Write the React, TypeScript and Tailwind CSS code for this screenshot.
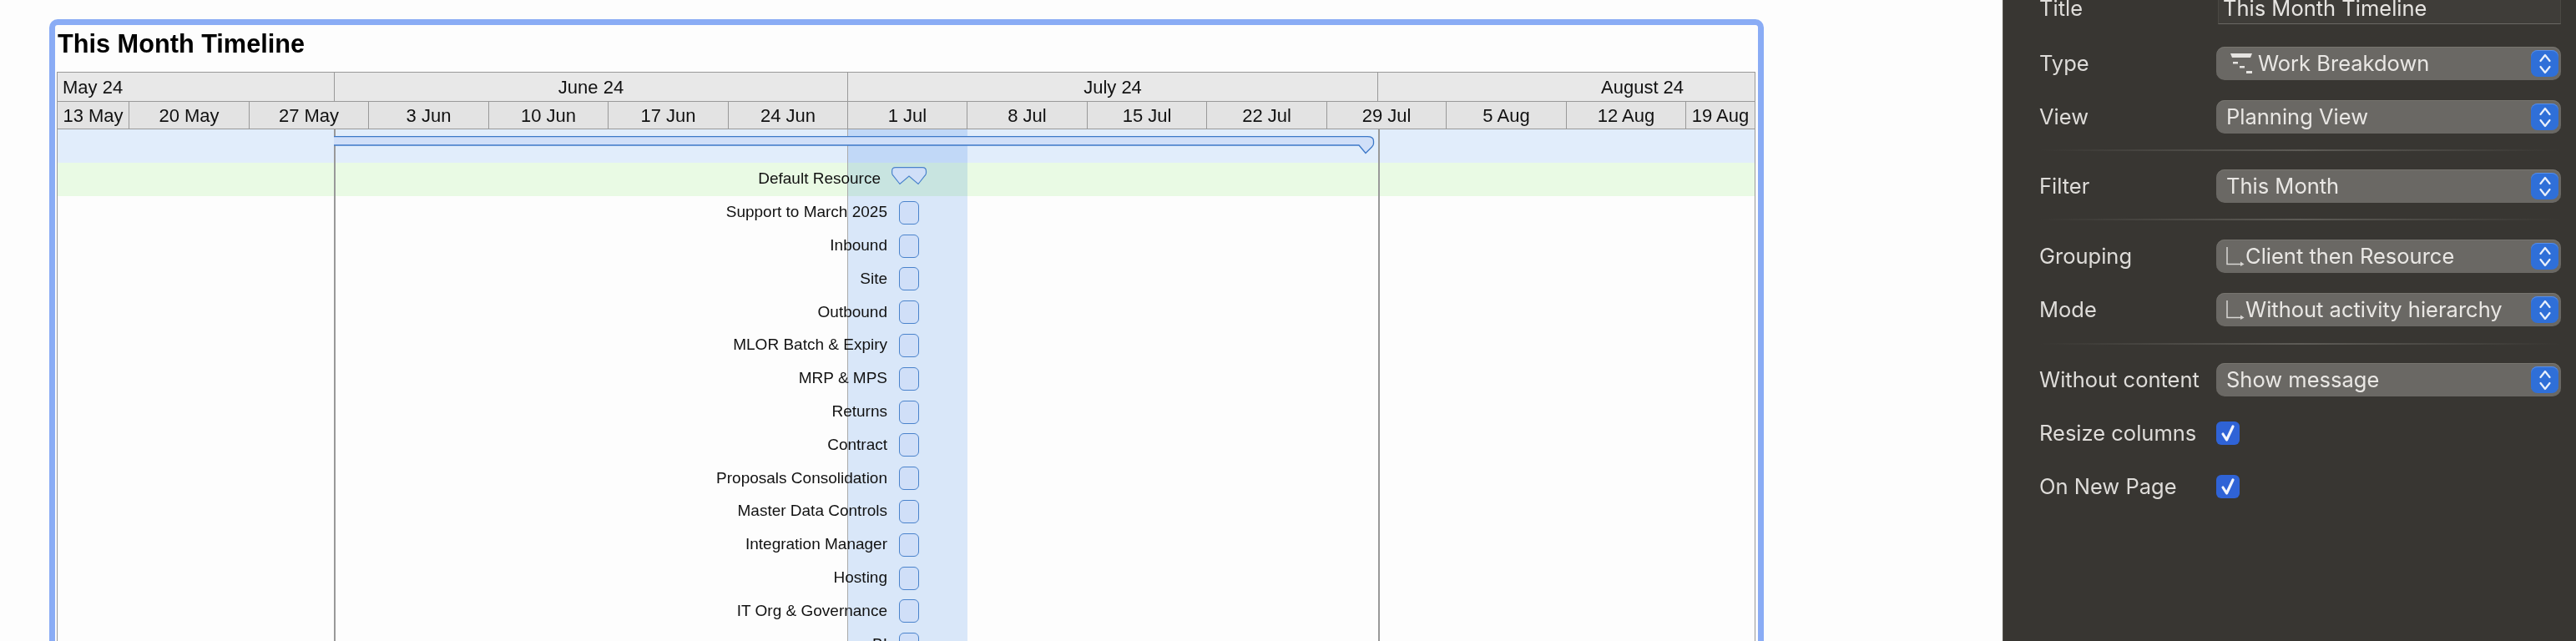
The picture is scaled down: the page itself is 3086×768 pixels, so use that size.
import React from "react";

const months = [
  { label: "May 24", w: "w-[332px]", cls: "pl-[6px] justify-start" },
  { label: "June 24", w: "w-[615px]", cls: "justify-center" },
  { label: "July 24", w: "w-[635px]", cls: "justify-center" },
  { label: "August 24", w: "w-[451px]", cls: "pl-[267px] justify-start border-r-0" },
];
const weeks = [
  { label: "13 May", w: "w-[86px]" },
  { label: "20 May", w: "w-[144px]" },
  { label: "27 May", w: "w-[143px]" },
  { label: "3 Jun", w: "w-[144px]" },
  { label: "10 Jun", w: "w-[143px]" },
  { label: "17 Jun", w: "w-[144px]" },
  { label: "24 Jun", w: "w-[143px]" },
  { label: "1 Jul", w: "w-[143px]" },
  { label: "8 Jul", w: "w-[144px]" },
  { label: "15 Jul", w: "w-[143px]" },
  { label: "22 Jul", w: "w-[144px]" },
  { label: "29 Jul", w: "w-[143px]" },
  { label: "5 Aug", w: "w-[144px]" },
  { label: "12 Aug", w: "w-[143px]" },
  { label: "19 Aug", w: "w-[82px] border-r-0" },
];
const rows = [
  "Support to March 2025",
  "Inbound",
  "Site",
  "Outbound",
  "MLOR Batch & Expiry",
  "MRP & MPS",
  "Returns",
  "Contract",
  "Proposals Consolidation",
  "Master Data Controls",
  "Integration Manager",
  "Hosting",
  "IT Org & Governance",
  "BI",
];

function Stepper() {
  return (
    <span className="w-[33px] h-[32px] rounded-[8px] bg-[#2f6fd8] flex items-center justify-center shadow-[inset_0_1px_0_#5a8fe6]">
      <svg width="16" height="25" viewBox="0 0 16 25" fill="none" stroke="#e9f0fb" strokeWidth="2.2" strokeLinecap="round" strokeLinejoin="round">
        <path d="M2.5 9 L8 2 L13.5 9" />
        <path d="M2.5 16 L8 23 L13.5 16" />
      </svg>
    </span>
  );
}

function WbsIcon() {
  return (
    <svg width="27" height="24" viewBox="0 0 27 24" fill="#e6e4e1" className="mr-[6px] ml-[5px] shrink-0">
      <path d="M0 0 H26 L24 5 H2 Z" />
      <rect x="3" y="10" width="6" height="2.5" />
      <rect x="11" y="15" width="6" height="2.5" />
      <rect x="19" y="21" width="7" height="3" />
    </svg>
  );
}

function ArrowIcon() {
  return (
    <svg width="23" height="23" viewBox="0 0 23 23" fill="none" stroke="#d8d6d3" strokeWidth="1.5" className="shrink-0">
      <path d="M1 0 V20.5 H19" />
      <path d="M17 17.5 L21.5 20.5 L17 23 Z" fill="#d8d6d3" stroke="none" />
    </svg>
  );
}

function Select({ label, icon }: { label: string; icon?: React.ReactNode }) {
  return (
    <div className="h-10 flex-1 rounded-[10px] bg-[#6a6864] flex items-center justify-between pr-[3px] shadow-[inset_0_1px_0_#77756f]">
      <span className="flex items-center text-[#e9e7e4] pl-[12px]">
        {icon}
        <span>{label}</span>
      </span>
      <Stepper />
    </div>
  );
}

function PanelRow({ label, children }: { label: string; children: React.ReactNode }) {
  return (
    <div className="flex items-center h-10">
      <span className="w-[212px] shrink-0 text-[#dedcd9]">{label}</span>
      {children}
    </div>
  );
}

function Check() {
  return (
    <span className="w-[28px] h-[28px] rounded-[6px] bg-[#2f63d6] flex items-center justify-center">
      <svg width="20" height="22" viewBox="0 0 20 22" fill="none" stroke="#f2f5fc" strokeWidth="3.2" strokeLinecap="round" strokeLinejoin="round">
        <path d="M4 12 L8.5 19 L16 3" />
      </svg>
    </span>
  );
}

function Separator({ className }: { className: string }) {
  return <div className={`h-[2px] bg-gradient-to-r from-transparent via-[#5d5b56] to-transparent ${className}`} />;
}

export default function App() {
  return (
    <div className="h-[768px] w-[3086px] overflow-hidden flex bg-[#fdfdfd] font-['Liberation_Sans',sans-serif]">
      <div className="w-[2399px] shrink-0 pl-[59px] pt-[23px]">
        <div className="w-[2054px] h-[800px] border-[7px] border-b-0 border-[#8aacf5] rounded-t-[10px] bg-[#fdfdfd] pl-[2px]">
          <div className="h-[56px] pl-[1px] pt-[5px] text-[30.7px] leading-[36px] font-bold text-black">This Month Timeline</div>
          <div className="w-[2035px] border-x border-t border-[#999] text-[22px] text-[#111]">
            <div className="flex h-[35px] bg-[#e8e8e8] border-b border-[#999]">
              {months.map((m) => (
                <div key={m.label} className={`${m.w} ${m.cls} flex items-center border-r border-[#999]`}>
                  {m.label}
                </div>
              ))}
            </div>
            <div className="flex h-[33px] bg-[#e3e3e3] border-b border-[#999]">
              {weeks.map((w) => (
                <div key={w.label} className={`${w.w} flex items-center justify-center border-r border-[#999] whitespace-nowrap`}>
                  {w.label}
                </div>
              ))}
            </div>
            <div className="relative h-[700px] text-[19px] text-[#111]">
              <div className="h-10 bg-[#e1edfb]" />
              <div className="h-10 bg-[#e9fae4] flex items-center">
                <span className="w-[986px] text-right relative z-20 -mt-[1px]">Default Resource</span>
                <svg width="43" height="22" viewBox="0 0 43 22" className="relative z-20 ml-[13px] -mt-[9px]" fill="#d0dff8" stroke="#4a83cc" strokeWidth="1.2">
                  <path d="M0.6 5 Q0.6 0.6 5 0.6 H37 Q41.5 0.6 41.5 5 V7 Q41.5 9 40 10.5 L32 20.5 L21 11 L10 20.5 L2 10.5 Q0.6 9 0.6 7 Z" />
                </svg>
              </div>
              {rows.map((r) => (
                <div key={r} className="h-[39.8px] flex items-center">
                  <span className="w-[994px] text-right relative z-20 -mt-[1px]">{r}</span>
                  <span className="relative z-20 ml-[14px] w-[24px] h-[28px] rounded-[6px] bg-[#d0dff8] border border-[#4a83cc]" />
                </div>
              ))}
              <div className="absolute top-0 bottom-0 left-[947px] w-[143px] bg-[#dbe9fb] mix-blend-multiply z-10" />
              <div className="absolute top-0 bottom-0 left-[331px] w-[1.5px] bg-[#999] z-10" />
              <div className="absolute top-0 bottom-0 left-[946px] w-px bg-[#aaa] z-10" />
              <div className="absolute top-0 bottom-0 left-[1582px] w-[1.5px] bg-[#999] z-10" />
              <svg width="1247" height="22" viewBox="0 0 1247 22" className="absolute left-[331px] top-[8px] z-20" fill="#d0dff8" stroke="#3c78c8" strokeWidth="1.3">
                <path d="M0 0.7 H1238 Q1245.5 0.7 1245.5 6 V9 Q1245.5 11 1243.5 13 L1236 20.5 L1228 11 H0" />
              </svg>
            </div>
          </div>
        </div>
      </div>
      <div className="flex-1 bg-[#383632] border-l border-[#55534e] pl-[43px] pr-[18px] font-['Inter',sans-serif] text-[25.5px] leading-none">
        <div className="flex items-center h-[38px] -mt-[9px]">
          <span className="w-[214px] shrink-0 text-[#dedcd9]">Title</span>
          <div className="flex-1 h-[38px] bg-[#3f3d39] border border-[#4a4843] border-b-[#6a6864] pl-[5px] flex items-center text-[#e6e4e1]">This Month Timeline</div>
        </div>
        <div className="mt-[27px] flex flex-col gap-6">
          <PanelRow label="Type"><Select label="Work Breakdown" icon={<WbsIcon />} /></PanelRow>
          <PanelRow label="View"><Select label="Planning View" /></PanelRow>
        </div>
        <Separator className="mt-[19px]" />
        <div className="mt-[22px]">
          <PanelRow label="Filter"><Select label="This Month" /></PanelRow>
        </div>
        <Separator className="mt-[19px]" />
        <div className="mt-[23px] flex flex-col gap-6">
          <PanelRow label="Grouping"><Select label="Client then Resource" icon={<ArrowIcon />} /></PanelRow>
          <PanelRow label="Mode"><Select label="Without activity hierarchy" icon={<ArrowIcon />} /></PanelRow>
        </div>
        <Separator className="mt-[20px]" />
        <div className="mt-[22px] flex flex-col gap-6">
          <PanelRow label="Without content"><Select label="Show message" /></PanelRow>
          <PanelRow label="Resize columns"><Check /></PanelRow>
          <PanelRow label="On New Page"><Check /></PanelRow>
        </div>
      </div>
    </div>
  );
}
